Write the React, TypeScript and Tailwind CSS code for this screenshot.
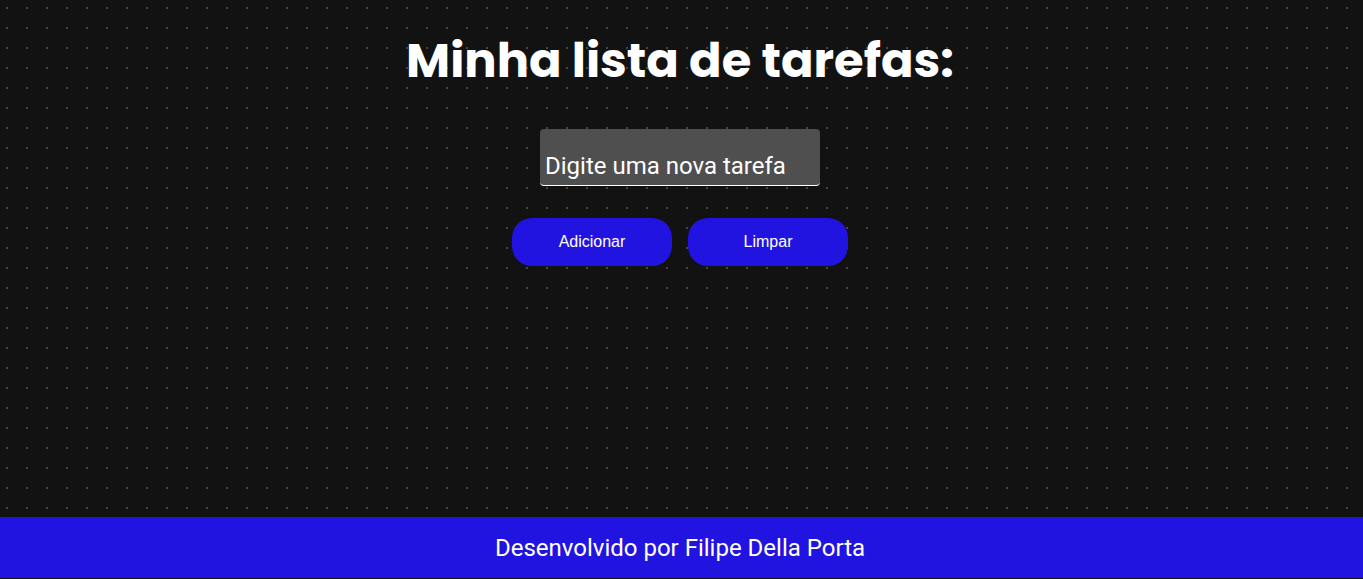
import { useState, type FormEvent } from "react";

const buttonStyle =
  "h-12 w-40 cursor-pointer rounded-[20px] bg-[#2214e0] font-['Liberation_Sans',Arial,sans-serif] text-base text-white";

export default function App() {
  const [draft, setDraft] = useState("");
  const [tasks, setTasks] = useState<string[]>([]);

  const addTask = (event: FormEvent) => {
    event.preventDefault();
    const text = draft.trim();
    if (!text) return;
    setTasks([...tasks, text]);
    setDraft("");
  };

  return (
    <div className="flex min-h-screen flex-col bg-[#121212] bg-[radial-gradient(circle,#464646_1px,transparent_1px)] bg-size-[20px_20px] bg-position-[-3px_-2px] pb-px font-[Roboto,sans-serif] text-2xl text-white">
      <main className="flex grow flex-col items-center pr-[3px] pt-[25px]">
        <h1 className="text-center font-[Poppins,Inter,sans-serif] text-5xl/[72px] font-bold">
          Minha lista de tarefas:
        </h1>
        <form onSubmit={addTask} className="mt-8 flex flex-col items-center gap-8">
          <input
            type="text"
            aria-label="Digite uma nova tarefa"
            placeholder="Digite uma nova tarefa"
            value={draft}
            onChange={(event) => setDraft(event.target.value)}
            className="h-[57px] w-[280px] rounded border-b border-white bg-[#4f4f4f] px-[5px] pt-[18px] outline-none placeholder:text-white placeholder:opacity-100"
          />
          <div className="flex gap-4">
            <button type="submit" className={buttonStyle}>
              Adicionar
            </button>
            <button type="button" onClick={() => setTasks([])} className={buttonStyle}>
              Limpar
            </button>
          </div>
        </form>
        {tasks.length > 0 && (
          <ul className="my-8 flex w-[280px] flex-col gap-2">
            {tasks.map((task, index) => (
              <li key={index}>{task}</li>
            ))}
          </ul>
        )}
      </main>
      <footer className="flex h-[61px] items-center justify-center bg-[#2214e0] pr-[3px]">
        <p>Desenvolvido por Filipe Della Porta</p>
      </footer>
    </div>
  );
}
